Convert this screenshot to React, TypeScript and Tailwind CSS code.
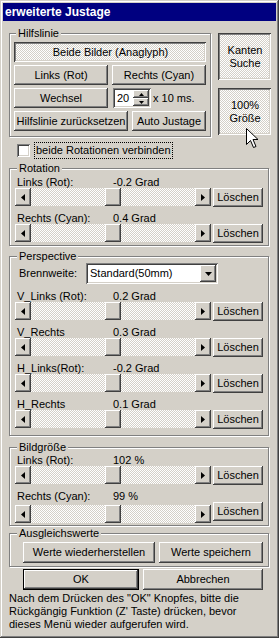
import React from "react";
import { clsx } from "clsx";

const FONT = "font-['Liberation_Sans',Arial,sans-serif]";
const RAISED =
  "shadow-[inset_-1px_-1px_#404040,inset_1px_1px_#ffffff,inset_-2px_-2px_#808080,inset_2px_2px_#d4d0c8]";
const PRESSED =
  "shadow-[inset_1px_1px_#404040,inset_-1px_-1px_#ffffff,inset_2px_2px_#808080,inset_-2px_-2px_#d4d0c8]";
const SUNKEN =
  "shadow-[inset_1px_1px_#808080,inset_-1px_-1px_#ffffff,inset_2px_2px_#404040,inset_-2px_-2px_#d4d0c8]";
const DITHER =
  "bg-[image:repeating-conic-gradient(#ffffff_0%_25%,#d4d0c8_0%_50%)] bg-[length:2px_2px]";

function Btn({
  children,
  className,
  pressed = false,
}: {
  children?: React.ReactNode;
  className?: string;
  pressed?: boolean;
}) {
  return (
    <button
      type="button"
      className={clsx(
        "flex shrink-0 items-center justify-center text-black",
        pressed ? clsx(PRESSED, DITHER, "pl-[1px] pt-[1px]") : clsx(RAISED, "bg-[#d4d0c8]"),
        className
      )}
    >
      {children}
    </button>
  );
}

function Tri({ dir }: { dir: "left" | "right" | "down" | "up" }) {
  if (dir === "left")
    return (
      <svg width="4" height="7" viewBox="0 0 4 7">
        <polygon points="4,0 4,7 0,3.5" fill="#000" />
      </svg>
    );
  if (dir === "right")
    return (
      <svg width="4" height="7" viewBox="0 0 4 7">
        <polygon points="0,0 0,7 4,3.5" fill="#000" />
      </svg>
    );
  if (dir === "down")
    return (
      <svg width="7" height="4" viewBox="0 0 7 4">
        <polygon points="0,0 7,0 3.5,4" fill="#000" />
      </svg>
    );
  return (
    <svg width="5" height="3" viewBox="0 0 5 3">
      <polygon points="0,3 5,3 2.5,0" fill="#000" />
    </svg>
  );
}

function ScrollBar({ className }: { className?: string }) {
  return (
    <div className={clsx("flex h-[18px] w-[196px] shrink-0", className)}>
      <div className={clsx("flex w-[16px] items-center justify-center bg-[#d4d0c8]", RAISED)}>
        <Tri dir="left" />
      </div>
      <div className={clsx("flex flex-1 justify-center", DITHER)}>
        <div className={clsx("w-[16px] bg-[#d4d0c8]", RAISED)} />
      </div>
      <div className={clsx("flex w-[16px] items-center justify-center bg-[#d4d0c8]", RAISED)}>
        <Tri dir="right" />
      </div>
    </div>
  );
}

function SliderRow({
  label,
  value,
  className,
  sliderClass,
}: {
  label: string;
  value: string;
  className?: string;
  sliderClass?: string;
}) {
  return (
    <div className={className}>
      <div className="flex h-[12px] leading-[12px]">
        <span className="w-[98px] pl-[2px]">{label}</span>
        <span>{value}</span>
      </div>
      <div className="flex items-start">
        <ScrollBar className={sliderClass} />
        <Btn className="ml-[2px] h-[19px] w-[50px]">Löschen</Btn>
      </div>
    </div>
  );
}

function Group({
  title,
  className,
  children,
}: {
  title: string;
  className?: string;
  children: React.ReactNode;
}) {
  return (
    <div
      className={clsx(
        "flex flex-col border border-[#808080] shadow-[1px_1px_0_#ffffff,inset_1px_1px_0_#ffffff]",
        className
      )}
    >
      <div className="-mt-[7px] ml-[2px] h-[13px] w-fit bg-[#d4d0c8] px-[2px] leading-[13px]">
        {title}
      </div>
      {children}
    </div>
  );
}

export default function App() {
  return (
    <div
      className={clsx(
        FONT,
        "relative flex h-[638px] w-[279px] flex-col bg-[#d4d0c8] p-[3px] text-[11px] text-black",
        "shadow-[inset_-1px_-1px_#404040,inset_1px_1px_#d4d0c8,inset_-2px_-2px_#808080,inset_2px_2px_#ffffff]"
      )}
    >
      {/* Title bar */}
      <div className="flex h-[18px] items-center bg-[#000080] pl-[2px] text-[12px] font-bold text-white">
        erweiterte Justage
      </div>

      {/* Hilfslinie + side buttons */}
      <div className="ml-[6px] mt-[12px] flex items-start">
        <Group title="Hilfslinie" className="w-[202px] pb-[5px] pl-[4px] pr-[4px]">
          <div className="mt-[2px] flex flex-col gap-[3px]">
            <Btn pressed className="h-[20px] w-full">
              Beide Bilder (Anaglyph)
            </Btn>
            <div className="flex gap-[4px]">
              <Btn className="h-[20px] w-[94px]">Links (Rot)</Btn>
              <Btn className="h-[20px] w-[94px]">Rechts (Cyan)</Btn>
            </div>
            <div className="flex items-center">
              <Btn className="h-[20px] w-[94px]">Wechsel</Btn>
              <div className={clsx("ml-[5px] flex h-[20px] w-[38px] bg-white p-[2px]", SUNKEN)}>
                <span className="flex-1 pl-[2px] leading-[16px]">20</span>
                <div className="flex w-[16px] flex-col">
                  <div className={clsx("flex h-[8px] items-center justify-center bg-[#d4d0c8]", RAISED)}>
                    <Tri dir="up" />
                  </div>
                  <div className={clsx("flex h-[8px] items-center justify-center bg-[#d4d0c8]", RAISED)}>
                    <svg width="5" height="3" viewBox="0 0 5 3">
                      <polygon points="0,0 5,0 2.5,3" fill="#000" />
                    </svg>
                  </div>
                </div>
              </div>
              <span className="ml-[2px]">x 10 ms.</span>
            </div>
            <div className="flex gap-[4px]">
              <Btn className="h-[20px] w-[114px]">Hilfslinie zurücksetzen</Btn>
              <Btn className="h-[20px] w-[74px]">Auto Justage</Btn>
            </div>
          </div>
        </Group>
        <div className="ml-[7px] flex w-[53px] flex-col gap-[8px]">
          <Btn pressed className="h-[47px] w-full flex-col leading-[13px]">
            <span>Kanten</span>
            <span>Suche</span>
          </Btn>
          <Btn pressed className="h-[47px] w-full flex-col leading-[13px]">
            <span>100%</span>
            <span>Größe</span>
          </Btn>
        </div>
      </div>

      {/* Checkbox */}
      <div className="ml-[14px] mt-[5px] flex h-[17px] items-center">
        <div className={clsx("h-[13px] w-[13px] bg-white", SUNKEN)} />
        <span className="ml-[4px] h-[17px] border border-dotted border-black px-[1px] leading-[15px]">
          beide Rotationen verbinden
        </span>
      </div>

      {/* Rotation */}
      <Group title="Rotation" className="ml-[6px] mt-[9px] w-[260px] pb-[2px] pl-[5px] pr-[5px]">
        <SliderRow className="mt-[1px]" label="Links (Rot):" value="-0.2 Grad" />
        <SliderRow className="mt-[5px]" label="Rechts (Cyan):" value="0.4 Grad" />
      </Group>

      {/* Perspective */}
      <Group title="Perspective" className="ml-[6px] mt-[10px] w-[260px] pb-[6px] pl-[5px] pr-[5px]">
        <div className="flex h-[21px] items-center">
          <span className="w-[71px] pl-[4px]">Brennweite:</span>
          <div className={clsx("flex h-[21px] w-[132px] items-center bg-white p-[2px]", SUNKEN)}>
            <span className="flex-1 pl-[2px]">Standard(50mm)</span>
            <div className={clsx("flex h-[17px] w-[16px] items-center justify-center bg-[#d4d0c8]", RAISED)}>
              <Tri dir="down" />
            </div>
          </div>
        </div>
        <SliderRow className="mt-[6px]" label="V_Links (Rot):" value="0.2 Grad" />
        <SliderRow className="mt-[5px]" label="V_Rechts" value="0.3 Grad" />
        <SliderRow className="mt-[5px]" label="H_Links(Rot):" value="-0.2 Grad" />
        <SliderRow className="mt-[5px]" label="H_Rechts" value="0.1 Grad" />
      </Group>

      {/* Bildgröße */}
      <Group title="Bildgröße" className="ml-[6px] mt-[11px] w-[260px] pb-[2px] pl-[5px] pr-[5px]">
        <SliderRow label="Links (Rot):" value="102 %" />
        <SliderRow className="mt-[5px]" sliderClass="mt-[3px]" label="Rechts (Cyan):" value="99 %" />
      </Group>

      {/* Ausgleichswerte */}
      <Group title="Ausgleichswerte" className="ml-[6px] mt-[7px] w-[260px] pb-[3px] pl-[5px] pr-[5px]">
        <div className="ml-[8px] mt-[2px] flex gap-[4px]">
          <Btn className="h-[21px] w-[132px]">Werte wiederherstellen</Btn>
          <Btn className="h-[21px] w-[104px]">Werte speichern</Btn>
        </div>
      </Group>

      {/* OK / Abbrechen */}
      <div className="ml-[20px] mt-[2px] flex gap-[4px]">
        <Btn className="h-[21px] w-[116px] border border-black">OK</Btn>
        <Btn className="h-[21px] w-[120px]">Abbrechen</Btn>
      </div>

      <p className="ml-[6px] mt-[2px] whitespace-nowrap leading-[13px]">
        Nach dem Drücken des "OK" Knopfes, bitte die
        <br />
        Rückgängig Funktion (Z' Taste) drücken, bevor
        <br />
        dieses Menü wieder aufgerufen wird.
      </p>

      {/* mouse pointer */}
      <svg
        className="absolute left-[246px] top-[128px]"
        width="13"
        height="21"
        viewBox="0 0 13 21"
      >
        <path
          d="M0.5 0.5 L0.5 16.5 L4.5 12.5 L7.5 19.5 L10 18.5 L7 11.5 L12 11.5 Z"
          fill="#ffffff"
          stroke="#000000"
          strokeWidth="1"
        />
      </svg>
    </div>
  );
}
